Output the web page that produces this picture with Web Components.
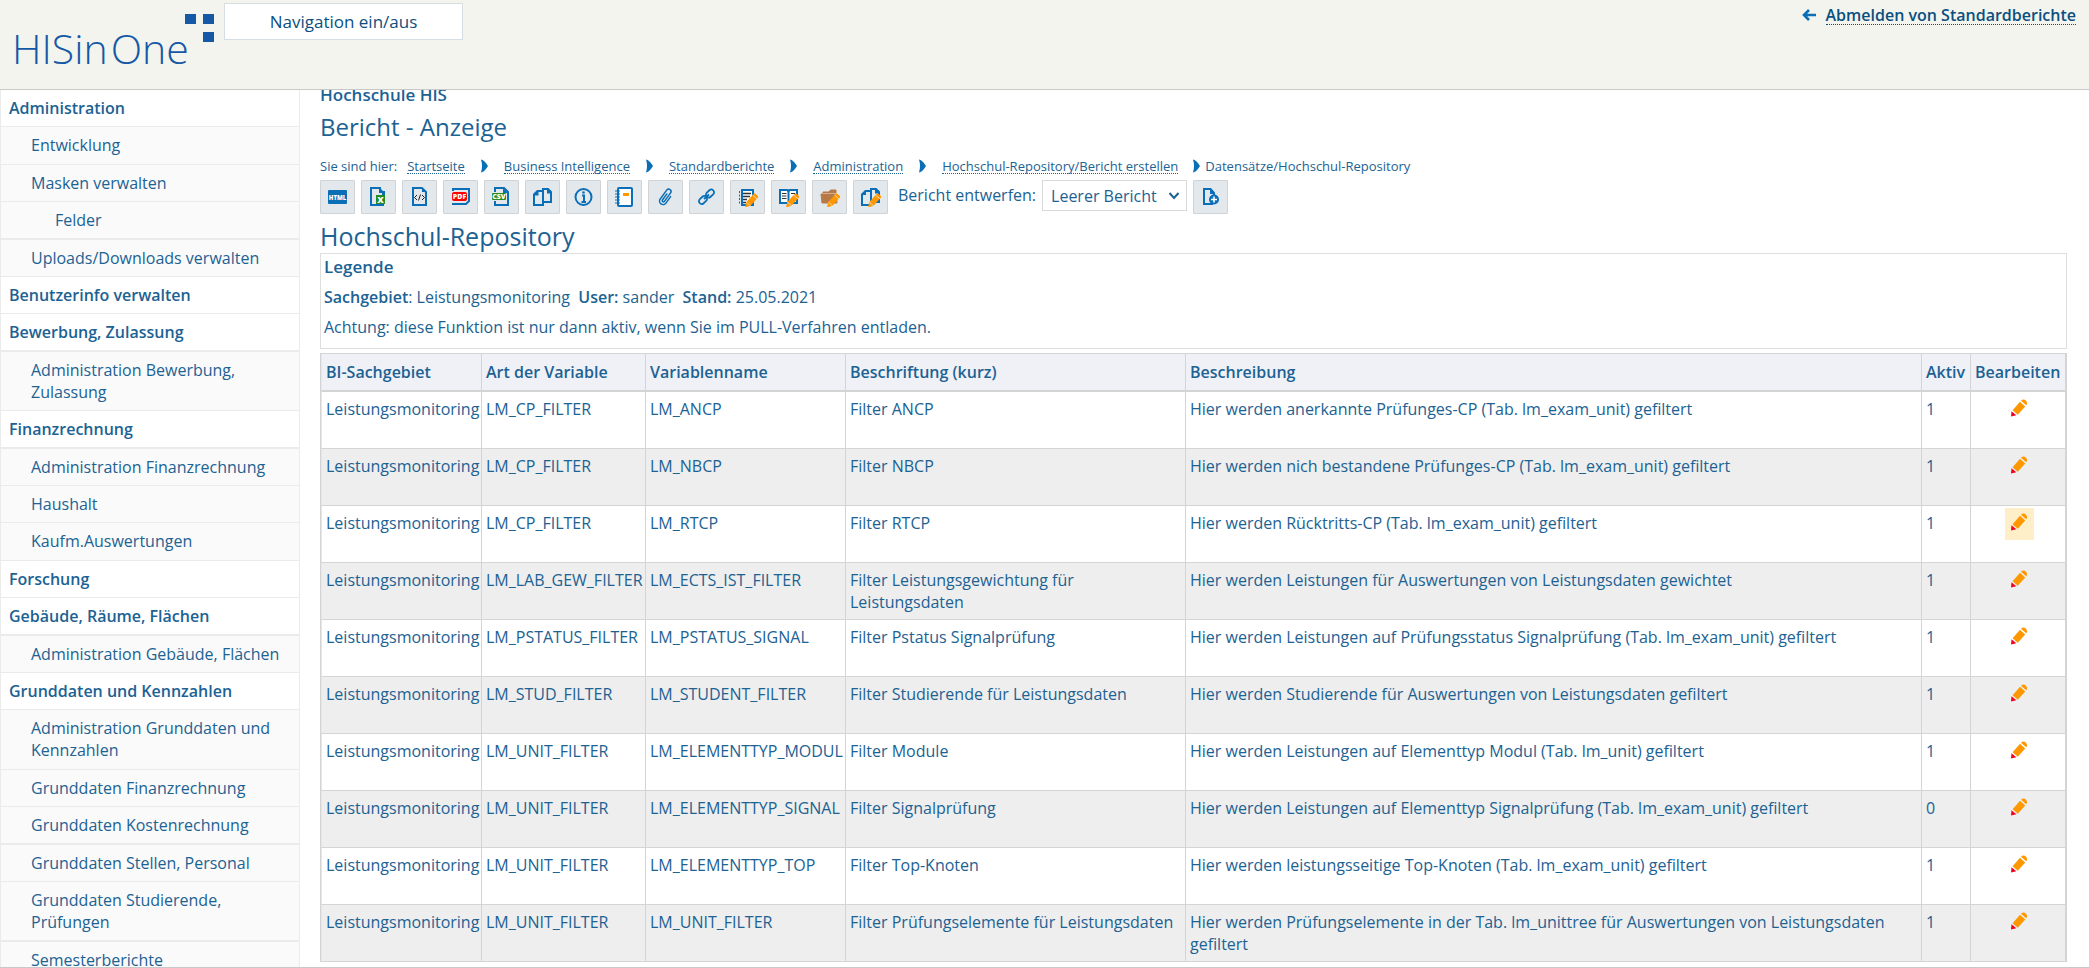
<!DOCTYPE html>
<html lang="de">
<head>
<meta charset="utf-8">
<title>HISinOne - Bericht - Anzeige</title>
<style>
:root{--text:#1c6293;--icon:#0b6fb8;--line:#d9d9d9;--soft:#ebebeb;--button:#e3e8ec}
html,body{height:100%;margin:0}
body{font:16px/22px "Open Sans",sans-serif;color:var(--text);background:#fff}
strong{font-weight:600}
</style>
</head>
<body>
<his-app>
  <his-header slot="header"></his-header>
  <his-nav slot="nav"></his-nav>
  <his-breadcrumb slot="main"></his-breadcrumb>
  <his-toolbar slot="main"></his-toolbar>
  <his-legend slot="main" heading="Hochschul-Repository">
    <p><strong>Sachgebiet</strong>: Leistungsmonitoring&nbsp; <strong>User:</strong> sander&nbsp; <strong>Stand:</strong> 25.05.2021</p>
    <p>Achtung: diese Funktion ist nur dann aktiv, wenn Sie im PULL-Verfahren entladen.</p>
  </his-legend>
  <his-table slot="main"></his-table>
</his-app>
<script>
const define = (name, html, setup) => customElements.define(name, class extends HTMLElement {
  constructor() {
    super();
    this.attachShadow({mode: 'open'}).innerHTML = html;
  }
  connectedCallback() { if (setup) setup(this, this.shadowRoot); }
});

const PENCIL = '<path fill="#ff9800" d="M7 20.500l1.300-5.500 7.500-8.300q.7-.7 1.500 0l2.700 2.300q.8.700.1 1.500l-7.600 8.300z"/><path stroke="#e3e8ec" stroke-width=".8" d="M14.500 8l4.300 3.800M8.300 15l4.200 3.800"/>';
const ICONS = {
  html: '<rect x="0" y="3" width="19" height="14" rx="1" fill="#0b6fb8"/><text x="9.500" y="12.500" font-size="6" font-weight="800" text-anchor="middle" fill="#fff">HTML</text>',
  excel: '<path d="M14 5V18H2V1H11V5H15V8" class="s"/><path d="M11 1l4 4h-4z" class="f"/><rect x="7" y="8" width="9" height="9" fill="#228b22"/><text x="11.500" y="15.500" font-size="9" font-weight="800" text-anchor="middle" fill="#fff">X</text>',
  xml: '<path d="M3 1H12L16 5V18H3z" class="s"/><path d="M12 1l4 4h-4z" class="f"/><path d="M7 8L4.500 10.500L7 13M12 8l2.500 2.500L12 13M10.500 7.500l-2 6" fill="none" stroke="#222" stroke-width="1"/>',
  pdf: '<path d="M2 4V2H18V14L15 17H1" class="s"/><rect x="1" y="5" width="15" height="9" rx="2" fill="red"/><text x="8.500" y="12" font-size="7" font-weight="800" text-anchor="middle" fill="#fff">PDF</text>',
  csv: '<path d="M3 5V1H12L16 5V18H3V14" class="s"/><path d="M11 1v5h5z" class="f"/><rect x="0" y="6" width="14" height="7" rx="1" fill="#228b22"/><text x="7" y="12" font-size="7" font-weight="800" text-anchor="middle" fill="#fff">CSV</text>',
  copy: '<path d="M9 4H4.500L1 7.500V18H10V15M4.500 4V7.500H1M10 2H15L18 5V15H10zM15 2v3.500h3" class="s"/>',
  info: '<circle cx="9.500" cy="10" r="8" class="s"/><path d="M8 8.500H10V15M7.500 15H12" class="s" stroke-width="1.600"/><circle cx="9.500" cy="5.500" r="1.300" class="f"/>',
  book: '<rect x="3" y="1" width="14" height="18" rx="1" fill="#fff" class="s"/><path d="M0 4H5M0 7H5M0 10H5M0 13H5M0 16H5" stroke="#0b6fb8" stroke-width="1.200"/><rect x="8" y="6" width="6" height="3" fill="#ff9800"/>',
  clip: '<path transform="translate(10 10) rotate(36)" d="M3.500 -3V5a3.500 3.500 0 0 1-7 0V-6a2.400 2.400 0 0 1 4.800 0V4.500a1.100 1.100 0 0 1-2.400 0V-3" fill="none" stroke="#0b6fb8" stroke-width="1.500" stroke-linecap="round"/>',
  link: '<g fill="none" stroke="#0b6fb8" stroke-width="1.800"><rect x="-4.500" y="-2.800" width="9" height="5.600" rx="2.800" transform="translate(13 6.500) rotate(-42)"/><rect x="-4.500" y="-2.800" width="9" height="5.600" rx="2.800" transform="translate(6 13) rotate(-42)"/><path d="M7 12l5-4.500"/></g>',
  list: '<path d="M4 3H15V18H4z" fill="#fff" class="s"/><path d="M1.500 4V18" stroke="#0b6fb8" stroke-dasharray="2 1.500"/><path d="M5 6.500H13M5 9.500H12M5 12.500H9M5 15.500H8" stroke="#333" stroke-width="1.400"/>' + PENCIL,
  read: '<path d="M1 3H8Q9.500 3 9.500 5Q9.500 3 11 3H18V16H1z" fill="#fff" class="s"/><path d="M9.500 4V16" class="s"/><path d="M3 6.500H7.500M3 9H7.500M3 11.500H7.500M12 6.500H16" stroke="#333" stroke-width="1.200"/>' + PENCIL,
  folder: '<path d="M1 7H16L17 16H2zM3 6V5H9L10.500 3H16V6" fill="#b87a44" stroke="#b87a44"/>' + PENCIL,
  copyedit: '<path d="M9 4H4.500L1 7.500V18H10V15M10 2H15L18 5V15H10zM15 2v3.500h3" class="s"/><path d="M5 4v4h-4zM14 1v5h5z" class="f"/>' + PENCIL,
  add: '<path d="M13 8V6L9.500 2H3V17H12" class="s"/><path d="M9 1v6h5z" class="f"/><circle cx="13" cy="12.500" r="5" class="f"/><path d="M13 9.500V15.500M10 12.500H16" stroke="#fff" stroke-width="1.600"/>',
  edit: '<path fill="#ff9800" d="M3.600 12.200L11 3.800l5.200 4.600L8.800 16.700zM12 2.700Q14.500 .2 17 2.700Q19 5 17.200 7.300z"/><path fill="#f2001d" d="M2 18.500l.5-5.200 4.800 4z"/>',
  back: '<path d="M9 5L4 10L9 15M4.500 10H16" fill="none" stroke="#0b6fb8" stroke-width="2.600"/>',
  chevron: '<path d="M6 3.500Q9 3.500 13 10Q9 16.500 6 16.500Q8 10 6 3.500z" class="f"/>'
};

define('his-icon', `<style>
:host{display:inline-flex;width:20px;height:20px;flex:none}
svg{width:20px;height:20px;display:block;font-family:"Open Sans",sans-serif}
.s{stroke:#0b6fb8;stroke-width:2}.s:not([fill]){fill:none}.f{fill:#0b6fb8}
</style><svg viewBox="0 0 20 20" aria-hidden="true"></svg>`,
(el, root) => { root.querySelector('svg').innerHTML = ICONS[el.getAttribute('name')]; });

define('his-app', `<style>
:host{display:flex;flex-direction:column;height:100vh;box-sizing:border-box;border-bottom:1px solid #c8c8c8;overflow:hidden}
.body{flex:1;min-height:0;display:flex;overflow:hidden}
main{flex:1;min-width:0;padding:0 22px 0 20px}
</style>
<slot name="header"></slot>
<div class="body"><slot name="nav"></slot><main><slot name="main"></slot></main></div>`);

define('his-header', `<style>
:host{display:block;flex:none}
header{display:flex;align-items:flex-start;height:89px;background:#f3f4ee;border-bottom:1px solid #c8c8c8}
.logo{display:flex;width:224px;height:89px;color:#1558a6}
.word{font-size:41px;line-height:52px;font-weight:300;margin:22px 0 0 12px;white-space:nowrap;width:173px}
.one{margin-left:3px}
.logo svg{width:29px;height:29px;margin-top:14px}
button{font:17px/22px "Open Sans",sans-serif;color:#0b4f7f;background:#fff;border:1px solid #d6dde3;width:239px;height:37px;margin:3px 0 0;padding:0}
.out{display:flex;align-items:center;gap:6px;margin:5px 13px 0 auto;color:#0b4f7f;font-weight:600;text-decoration:none}
.out span{border-bottom:1px dotted #0b4f7f;line-height:18px}
</style>
<header><div class="logo"><div class="word">HISin<span class="one">One</span></div>
<svg viewBox="0 0 29 29" aria-hidden="true"><path fill="#1558a6" d="M0 0h11v10H0zM18 0h11v10H18zM18 18h11v10H18z"/></svg></div>
<button type="button">Navigation ein/aus</button>
<a class="out" href="#"><his-icon name="back"></his-icon><span>Abmelden von Standardberichte</span></a></header>`);

const NAV = [
  [1, 'Administration'], [2, 'Entwicklung', 'roomy'], [2, 'Masken verwalten'], [3, 'Felder', 'thick'],
  [2, 'Uploads/Downloads verwalten'], [1, 'Benutzerinfo verwalten'], [1, 'Bewerbung, Zulassung', 'thick'],
  [2, 'Administration Bewerbung, Zulassung'], [1, 'Finanzrechnung', 'thick'], [2, 'Administration Finanzrechnung'],
  [2, 'Haushalt'], [2, 'Kaufm.Auswertungen', 'roomy'], [1, 'Forschung'], [1, 'Gebäude, Räume, Flächen', 'thick'],
  [2, 'Administration Gebäude, Flächen'], [1, 'Grunddaten und Kennzahlen'],
  [2, 'Administration Grunddaten und Kennzahlen', 'roomy'], [2, 'Grunddaten Finanzrechnung'],
  [2, 'Grunddaten Kostenrechnung', 'thick'], [2, 'Grunddaten Stellen, Personal'],
  [2, 'Grunddaten Studierende, Prüfungen', 'thick'], [2, 'Semesterberichte']
];
define('his-nav', `<style>
:host{display:block;flex:none;width:298px;border:solid var(--soft);border-width:0 1px}
ul{list-style:none;margin:0;padding:0}
a{display:block;padding:7px 12px 7px 30px;color:inherit;text-decoration:none;background:#fafafa;border-bottom:1px solid var(--soft)}
.l1{font-weight:600;padding-left:8px;background:#fff}
.l3{padding-left:54px}
.thick{border-bottom-width:2px}
.roomy{padding-bottom:8px}
</style><nav><ul></ul></nav>`,
(el, root) => { root.querySelector('ul').innerHTML = NAV.map(([level, label, extra]) =>
  `<li><a href="#" class="l${level} ${extra || ''}">${label}</a></li>`).join(''); });

define('his-breadcrumb', `<style>
:host{display:block}
.org{font-size:17px;font-weight:600;line-height:22px;margin-top:-6px}
h1{font-size:24px;line-height:32px;font-weight:400;margin:5px 0 0}
nav{display:flex;align-items:center;font-size:13px;line-height:18px;margin:12px 0 3px;height:22px}
a{color:inherit;text-decoration:none;border-bottom:1px dotted var(--text);line-height:14px}
nav>span:first-child{margin-right:10px}
his-icon{margin:0 9px 0 10px}
his-icon:last-of-type{margin:0 -2px 0 9px}
</style>
<div class="org">Hochschule HIS</div><h1>Bericht - Anzeige</h1><nav aria-label="Sie sind hier"></nav>`,
(el, root) => { root.querySelector('nav').innerHTML = '<span>Sie sind hier:</span>' +
  ['Startseite', 'Business Intelligence', 'Standardberichte', 'Administration', 'Hochschul-Repository/Bericht erstellen']
  .map(t => `<a href="#">${t}</a><his-icon name="chevron"></his-icon>`).join('') + '<span>Datensätze/Hochschul-Repository</span>'; });

define('his-toolbar', `<style>
:host{display:block}
.bar{display:flex;gap:6px}
button{width:35px;height:34px;padding:0;display:flex;align-items:center;justify-content:center;background:var(--button);border:1px solid #d0d3d6;border-radius:1px}
label{margin:4px 0 0 4px}
.pick{display:grid}
select{grid-area:1/1;appearance:none;font:16px/22px "Open Sans",sans-serif;color:inherit;background:#fff;border:1px solid #d9d9d9;border-radius:0;width:145px;height:31px;padding:0 8px}
svg{grid-area:1/1;justify-self:end;width:12px;height:8px;margin:12px 7px 0 0;pointer-events:none}
</style>
<div class="bar">${[['html','HTML'],['excel','Excel'],['xml','XML'],['pdf','PDF'],['csv','CSV'],['copy','Kopieren'],['info','Info'],['book','Glossar'],['clip','Anhang'],['link','Link'],['list','Liste bearbeiten'],['read','Beschreibung bearbeiten'],['folder','Ordner bearbeiten'],['copyedit','Kopie bearbeiten']]
.map(([i, t]) => `<button type="button" aria-label="${t}"><his-icon name="${i}"></his-icon></button>`).join('')}
<label for="design">Bericht entwerfen:</label>
<span class="pick"><select id="design"><option>Leerer Bericht</option></select>
<svg viewBox="0 0 12 8" aria-hidden="true"><path d="M1.500 1l4.500 5 4.500-5" fill="none" stroke="#1c6293" stroke-width="2"/></svg></span>
<button type="button" aria-label="Neuer Bericht"><his-icon name="add"></his-icon></button></div>`);

define('his-legend', `<style>
:host{display:block}
h2{font-size:25px;line-height:34px;font-weight:400;margin:5px 0 0}
section{border:1px solid #dedede;height:94px;padding:0 3px}
h3{font-size:17px;line-height:26px;font-weight:600;margin:0 0 6px}
::slotted(p){margin:0 0 8px}
</style><h2></h2><section><h3>Legende</h3><slot></slot></section>`,
(el, root) => { root.querySelector('h2').textContent = el.getAttribute('heading'); });

const ROWS = [
  ['LM_CP_FILTER', 'LM_ANCP', 'Filter ANCP', 'Hier werden anerkannte Prüfunges-CP (Tab. lm_exam_unit) gefiltert', 1],
  ['LM_CP_FILTER', 'LM_NBCP', 'Filter NBCP', 'Hier werden nich bestandene Prüfunges-CP (Tab. lm_exam_unit) gefiltert', 1],
  ['LM_CP_FILTER', 'LM_RTCP', 'Filter RTCP', 'Hier werden Rücktritts-CP (Tab. lm_exam_unit) gefiltert', 1],
  ['LM_LAB_GEW_FILTER', 'LM_ECTS_IST_FILTER', 'Filter Leistungsgewichtung für Leistungsdaten', 'Hier werden Leistungen für Auswertungen von Leistungsdaten gewichtet', 1],
  ['LM_PSTATUS_FILTER', 'LM_PSTATUS_SIGNAL', 'Filter Pstatus Signalprüfung', 'Hier werden Leistungen auf Prüfungsstatus Signalprüfung (Tab. lm_exam_unit) gefiltert', 1],
  ['LM_STUD_FILTER', 'LM_STUDENT_FILTER', 'Filter Studierende für Leistungsdaten', 'Hier werden Studierende für Auswertungen von Leistungsdaten gefiltert', 1],
  ['LM_UNIT_FILTER', 'LM_ELEMENTTYP_MODUL', 'Filter Module', 'Hier werden Leistungen auf Elementtyp Modul (Tab. lm_unit) gefiltert', 1],
  ['LM_UNIT_FILTER', 'LM_ELEMENTTYP_SIGNAL', 'Filter Signalprüfung', 'Hier werden Leistungen auf Elementtyp Signalprüfung (Tab. lm_exam_unit) gefiltert', 0],
  ['LM_UNIT_FILTER', 'LM_ELEMENTTYP_TOP', 'Filter Top-Knoten', 'Hier werden leistungsseitige Top-Knoten (Tab. lm_exam_unit) gefiltert', 1],
  ['LM_UNIT_FILTER', 'LM_UNIT_FILTER', 'Filter Prüfungselemente für Leistungsdaten', 'Hier werden Prüfungselemente in der Tab. lm_unittree für Auswertungen von Leistungsdaten gefiltert', 1]
];
define('his-table', `<style>
:host{display:block;margin-top:4px}
table{width:100%;table-layout:fixed;border-collapse:separate;border-spacing:0;border:1px solid #d4d4d4;border-bottom:0;border-right-width:2px}
th,td{text-align:left;border:solid #d4d4d4;border-width:0 0 1px 1px;padding:0 3px 0 4px;white-space:nowrap;box-sizing:border-box}
th:first-child,td:first-child{border-left-color:#e6e6e6}
th{height:38px;font-weight:600;background:#f0f1f6;border-bottom-width:2px}
td{height:57px;vertical-align:top;padding-top:6px;padding-bottom:6px}
td:nth-child(4),td:nth-child(5){white-space:normal}
tbody tr:nth-child(even){background:#eee}
td:last-child{text-align:center;padding:2px 0 0 2px}
a{display:inline-flex;justify-content:center;width:29px;height:32px;padding-top:4px;box-sizing:border-box;vertical-align:top}
.hot{background:#ffefc8}
</style>
<table><colgroup><col style="width:160px"><col style="width:164px"><col style="width:200px"><col style="width:340px"><col><col style="width:49px"><col style="width:95px"></colgroup>
<thead><tr>${['BI-Sachgebiet', 'Art der Variable', 'Variablenname', 'Beschriftung (kurz)', 'Beschreibung', 'Aktiv', 'Bearbeiten'].map(h => `<th scope="col">${h}</th>`).join('')}</tr></thead>
<tbody>${ROWS.map((r, i) => `<tr><td>Leistungsmonitoring</td>${r.map(c => `<td>${c}</td>`).join('')}<td><a href="#" aria-label="Bearbeiten"${i === 2 ? ' class="hot"' : ''}><his-icon name="edit"></his-icon></a></td></tr>`).join('')}</tbody></table>`);
</script>
</body>
</html>
